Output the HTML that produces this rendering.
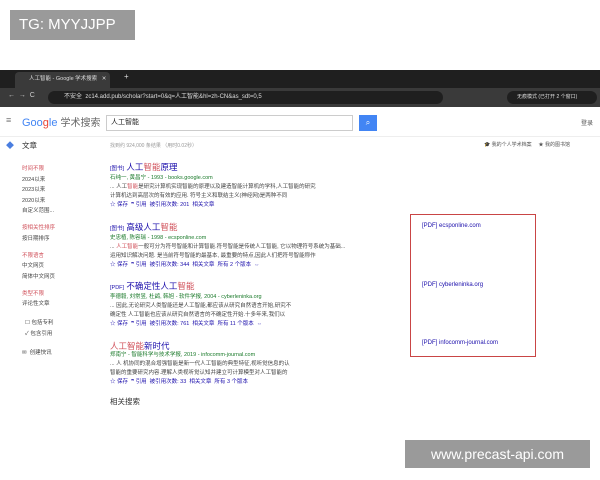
<!DOCTYPE html><html><head><meta charset="utf-8"><style>
*{margin:0;padding:0;box-sizing:border-box}
body{width:600px;height:480px;background:#fff;font-family:"Liberation Sans","Noto Sans CJK SC",sans-serif;position:relative;overflow:hidden;font-size:6px;color:#222}
.a{position:absolute;white-space:nowrap}
.r{color:#d0505a}.b{color:#1a0dab}.g{color:#1a7a2a}.l{color:#1a0dab}
.t{font-size:8.5px;color:#1a0dab}
</style></head><body>
<div class="a" style="left:10px;top:10px;width:125px;height:30px;background:#9a9a9a;color:#fff;font-size:15px;line-height:30px;padding-left:9px">TG: MYYJJPP</div>
<div class="a" style="left:0;top:70px;width:600px;height:18px;background:#1f1f1f"></div>
<div class="a" style="left:15px;top:72px;width:95px;height:16px;background:#3a3a3a;border-radius:4px 4px 0 0;color:#ddd;font-size:5.5px;line-height:14px;padding-left:14px">人工智能 - Google 学术搜索 &nbsp; ✕</div>
<div class="a" style="left:124px;top:72px;color:#ddd;font-size:8px">+</div>
<div class="a" style="left:0;top:88px;width:600px;height:19px;background:#3a3a3a"></div>
<div class="a" style="left:48px;top:91px;width:395px;height:13px;background:#1f1f1f;border-radius:7px;color:#ddd;font-size:6px;line-height:13px;padding-left:16px">不安全 &nbsp;zc14.add.pub/scholar?start=0&amp;q=人工智能&amp;hl=zh-CN&amp;as_sdt=0,5</div>
<div class="a" style="left:8px;top:92px;color:#ccc;font-size:7px">← &nbsp;→ &nbsp;C</div>
<div class="a" style="left:507px;top:91px;width:90px;height:13px;background:#1f1f1f;border-radius:7px;color:#ddd;font-size:5px;line-height:13px;padding-left:10px">无痕模式 (已打开 2 个窗口)</div>
<div class="a" style="left:0;top:107px;width:600px;height:30px;background:#fff;border-bottom:1px solid #eee"></div>
<div class="a" style="left:6px;top:115px;color:#777;font-size:9px">≡</div>
<div class="a" style="left:22px;top:114px;font-size:11px;color:#4285f4">Goo<span style="color:#ea4335">g</span>le <span style="color:#666;font-size:10px">学术搜索</span></div>
<div class="a" style="left:106px;top:115px;width:247px;height:16px;border:1px solid #ccc;font-size:7px;line-height:14px;padding-left:4px">人工智能</div>
<div class="a" style="left:359px;top:115px;width:18px;height:16px;background:#4285f4;color:#fff;font-size:8px;text-align:center;line-height:16px">⌕</div>
<div class="a" style="left:581px;top:118px;color:#555;font-size:6px">登录</div>
<div class="a" style="left:6px;top:140px;color:#4a7ee0;font-size:8px">◆</div>
<div class="a" style="left:22px;top:140px;color:#333;font-size:7.5px">文章</div>
<div class="a" style="left:110px;top:142px;color:#999;font-size:5px">找到约 924,000 条结果 （用时0.02秒）</div>
<div class="a" style="left:484px;top:141px;color:#555;font-size:5px">🎓 我的个人学术档案 &nbsp; &nbsp; ★ 我的图书馆</div>
<div class="a" style="left:22px;top:164px;line-height:10.5px;font-size:5.5px;color:#444">
<div class="r">时间不限</div><div>2024以来</div><div>2023以来</div><div>2020以来</div><div>自定义范围...</div><br>
<div class="r" style="margin-top:-4px">按相关性排序</div><div>按日期排序</div><br>
<div class="r" style="margin-top:-4px">不限语言</div><div>中文网页</div><div>简体中文网页</div><br>
<div class="r" style="margin-top:-4px">类型不限</div><div>评论性文章</div><br>
<div style="margin-top:-2px">&nbsp; ☐ 包括专利</div><div>&nbsp; ✓ 包含引用</div><br>
<div style="margin-top:-2px">✉ &nbsp;创建快讯</div></div>
<div class="a" style="left:110px;top:163px;line-height:9px;font-size:5.5px;color:#444">
<div class="t"><span style="font-size:5.5px">[图书]</span> 人工<span class="r">智能</span>原理</div>
<div class="g">石纯一, 黄昌宁 - 1993 - books.google.com</div>
<div>... 人工<span class="r">智能</span>是研究计算机实现智能的原理以及建造智能计算机的学科,人工智能的研究</div>
<div>计算机达到高层次的有效的应用. 符号主义和联结主义(神经网)是两种不同</div>
<div class="b">☆ 保存 &nbsp;❞ 引用 &nbsp;被引用次数: 201 &nbsp;相关文章</div>
<div style="height:13px"></div>
<div class="t"><span style="font-size:5.5px">[图书]</span> 高级人工<span class="r">智能</span></div>
<div class="g">史忠植, 陈容瑞 - 1998 - ecsponline.com</div>
<div>... <span class="r">人工智能</span>一般可分为符号智能和计算智能.符号智能是传统人工智能, 它以物理符号系统为基础...</div>
<div>运用知识解决问题. 是当前符号智能的最基本, 最重要的特点,因此人们把符号智能称作</div>
<div class="b">☆ 保存 &nbsp;❞ 引用 &nbsp;被引用次数: 344 &nbsp;相关文章 &nbsp;所有 2 个版本 &nbsp;⇔</div>
<div style="height:12px"></div>
<div class="t"><span style="font-size:5.5px">[PDF]</span> 不确定性人工<span class="r">智能</span></div>
<div class="g">李德毅, 刘常昱, 杜鹢, 韩旭 - 软件学报, 2004 - cyberleninka.org</div>
<div>... 因此,无论研究人类智能还是人工智能,都应该从研究自然语言开始,研究不</div>
<div>确定性 人工智能也应该从研究自然语言的不确定性开始.十多年来,我们以</div>
<div class="b">☆ 保存 &nbsp;❞ 引用 &nbsp;被引用次数: 761 &nbsp;相关文章 &nbsp;所有 11 个版本 &nbsp;⇔</div>
<div style="height:13px"></div>
<div class="t"><span class="r">人工智能</span>新时代</div>
<div class="g">郑南宁 - 智能科学与技术学报, 2019 - infocomm-journal.com</div>
<div>... 人 机协同的混合增强智能是新一代人工智能的典型特征,视听觉信息的认</div>
<div>智能的重要研究内容.理解人类视听觉认知并建立可计算模型对人工智能的</div>
<div class="b">☆ 保存 &nbsp;❞ 引用 &nbsp;被引用次数: 33 &nbsp;相关文章 &nbsp;所有 3 个版本</div>
<div style="height:10px"></div>
<div style="font-size:7.5px;color:#333">相关搜索</div></div>
<div class="a" style="left:410px;top:214px;width:126px;height:143px;border:1px solid #c94545"></div>
<div class="a b" style="left:422px;top:223px;font-size:6px">[PDF] ecsponline.com</div>
<div class="a b" style="left:422px;top:282px;font-size:6px">[PDF] cyberleninka.org</div>
<div class="a b" style="left:422px;top:340px;font-size:6px">[PDF] infocomm-journal.com</div>
<div class="a" style="left:405px;top:440px;width:185px;height:28px;background:#9a9a9a;color:#fff;font-size:14px;line-height:28px;text-align:center">www.precast-api.com</div>
</body></html>
